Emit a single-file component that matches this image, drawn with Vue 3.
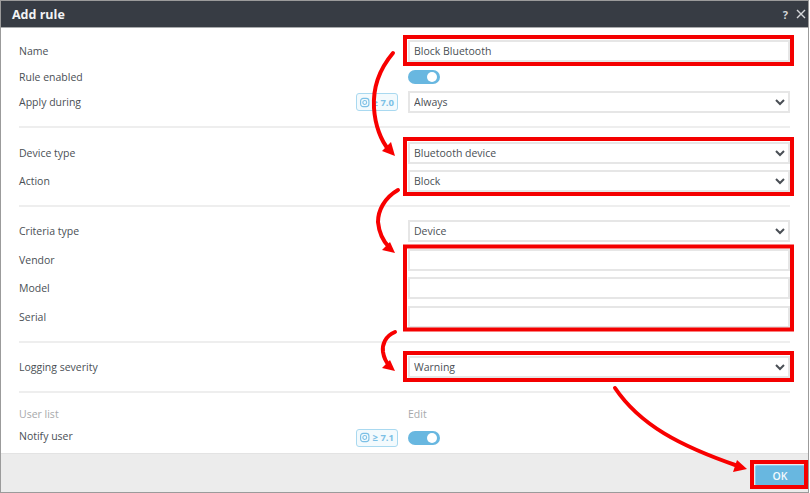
<script setup>
const arrows = [
  { d: 'M393 53C377 72 373 92 374 108C375 125 381 141 389 150', head: '395,156 382,151 391,142' },
  { d: 'M398 190C384 198 378 211 378 222C379 232 383 241 389 247', head: '395,253 382,250 390,242' },
  { d: 'M395 332C385 336 382 345 383 352C384 358 386 362 389 365', head: '395,371 382,368 390,360' },
  { d: 'M615 388C640 425 680 446 738 466', head: '747,469 733,472 737,460' },
]
const boxes = [
  { x: 405, y: 37, width: 387, height: 27 },
  { x: 405, y: 139, width: 387, height: 55 },
  { x: 405, y: 246.5, width: 387, height: 83 },
  { x: 405, y: 353, width: 387, height: 27 },
  { x: 752, y: 462, width: 54, height: 25 },
]
</script>

<template>
  <div class="dialog">
    <header class="titlebar">
      <h1 class="title">Add rule</h1>
      <div class="actions">
        <span class="help">?</span>
        <svg class="close" width="10" height="10" viewBox="0 0 10 10">
          <path d="M1 1L9 9M9 1L1 9" stroke="#d5d7da" stroke-width="1.4" fill="none" />
        </svg>
      </div>
    </header>

    <main class="content">
      <section class="group first">
        <div class="row tall"><label>Name</label><input class="field" value="Block Bluetooth" /></div>
        <div class="row short"><label>Rule enabled</label><span class="toggle"><i></i></span></div>
        <div class="row tall">
          <label>Apply during</label>
          <span class="badge">
            <svg width="11" height="11" viewBox="0 0 11 11"><rect x="0.7" y="0.7" width="9.6" height="9.6" rx="3" fill="none" stroke="#7cc0e6" stroke-width="1.3" /><circle cx="5.5" cy="5.5" r="2.2" fill="none" stroke="#7cc0e6" stroke-width="1.2" /></svg>
            <b>≥ 7.0</b>
          </span>
          <select class="field"><option>Always</option></select>
        </div>
      </section>

      <section class="group second">
        <div class="row tall"><label>Device type</label><select class="field"><option>Bluetooth device</option></select></div>
        <div class="row tall"><label>Action</label><select class="field"><option>Block</option></select></div>
      </section>

      <section class="group criteria">
        <div class="row tall"><label>Criteria type</label><select class="field"><option>Device</option></select></div>
        <div class="row tall"><label>Vendor</label><input class="field" /></div>
        <div class="row tall"><label>Model</label><input class="field" /></div>
        <div class="row tall"><label>Serial</label><input class="field" /></div>
      </section>

      <section class="group">
        <div class="row tall"><label>Logging severity</label><select class="field"><option>Warning</option></select></div>
      </section>

      <section class="group last">
        <div class="row text muted"><label>User list</label><span>Edit</span></div>
        <div class="row short">
          <label class="notify">Notify user</label>
          <span class="badge">
            <svg width="11" height="11" viewBox="0 0 11 11"><rect x="0.7" y="0.7" width="9.6" height="9.6" rx="3" fill="none" stroke="#7cc0e6" stroke-width="1.3" /><circle cx="5.5" cy="5.5" r="2.2" fill="none" stroke="#7cc0e6" stroke-width="1.2" /></svg>
            <b>≥ 7.1</b>
          </span>
          <span class="toggle"><i></i></span>
        </div>
      </section>
    </main>

    <footer class="footer"><button class="ok">OK</button></footer>

    <svg class="annotations" width="810" height="493" viewBox="0 0 810 493">
      <rect v-for="(b, i) in boxes" :key="i" v-bind="b" fill="none" stroke="#f40000" stroke-width="4" />
      <g v-for="(a, i) in arrows" :key="'a' + i">
        <path :d="a.d" fill="none" stroke="#f80000" stroke-width="4" stroke-linecap="round" />
        <polygon :points="a.head" fill="#f80000" />
      </g>
    </svg>
  </div>
</template>

<style>
html, body { margin: 0; background: #fff; overflow: hidden; }
</style>

<style scoped>
.dialog {
  position: relative;
  box-sizing: border-box;
  width: 809px;
  height: 493px;
  border: 1px solid #9b9b9b;
  display: flex;
  flex-direction: column;
  font-family: "Open Sans", "Noto Sans", sans-serif;
  font-size: 10.5px;
  color: #4a4f55;
  background: #fff;
}
.titlebar {
  flex: 0 0 26px;
  background: #373c44;
  display: flex;
  align-items: center;
  justify-content: space-between;
  padding: 0 2px 0 11px;
  border-bottom: 1px solid #a9abad;
}
.title { margin: 0; font-size: 12.5px; font-weight: 700; color: #f2f3f4; }
.actions { display: flex; align-items: center; gap: 8px; }
.help { color: #d5d7da; font-size: 11px; font-weight: 700; }
.content { flex: 1; padding: 0 18px; }
.group { padding: 13px 0; border-bottom: 2px solid #eeeeee; display: flex; flex-direction: column; gap: 6.5px; }
.group.first { padding-top: 12px; }
.group.second { padding-top: 14px; gap: 6px; }
.group.criteria { gap: 6.67px; }
.group.last { border-bottom: 0; padding: 13.5px 0 0; gap: 7.5px; }
.row {
  display: grid;
  grid-template-columns: 1fr auto 382px;
  align-items: center;
  column-gap: 10px;
}
.row label { grid-column: 1; }
.row label.notify { margin-bottom: 3px; }
.row > :last-child { grid-column: 3; }
.tall { height: 22px; }
.short { height: 16px; }
.text { height: 15px; }
.muted { color: #a7a9ab; }
.field {
  box-sizing: border-box;
  width: 382px;
  height: 22px;
  margin: 0;
  border: 2px solid #e6e6e6;
  border-radius: 0;
  background: #fff;
  color: #4a4f55;
  font: inherit;
  padding: 0 4px;
  outline: 0;
}
select.field { padding: 0; }
.toggle {
  display: flex;
  align-items: center;
  justify-content: flex-end;
  box-sizing: border-box;
  width: 32px;
  height: 14px;
  padding-right: 3px;
  border-radius: 7px;
  background: #68b7e0;
}
.toggle i { width: 10px; height: 10px; border-radius: 50%; background: #fff; }
.badge {
  grid-column: 2;
  box-sizing: border-box;
  width: 42px;
  height: 18px;
  display: flex;
  align-items: center;
  gap: 3px;
  padding: 0 3px;
  border: 1px solid #a9d9f0;
  border-radius: 3px;
  background: #f3fafd;
  color: #7cc0e6;
  font-size: 9.5px;
  white-space: nowrap;
}
.badge b { font-weight: 700; }
.footer {
  box-sizing: border-box;
  flex: 0 0 39px;
  background: #ececec;
  border-top: 1px solid #e3e3e3;
  display: flex;
  justify-content: flex-end;
  align-items: flex-start;
  padding: 11px 3px 0 0;
}
.ok {
  width: 50px;
  height: 21px;
  padding: 0;
  border: 1px solid #8ccbea;
  border-radius: 2px;
  background: #68b7e0;
  color: #f4fafd;
  font: inherit;
  font-weight: 600;
}
.annotations { position: absolute; left: -1px; top: -1px; pointer-events: none; }
</style>
